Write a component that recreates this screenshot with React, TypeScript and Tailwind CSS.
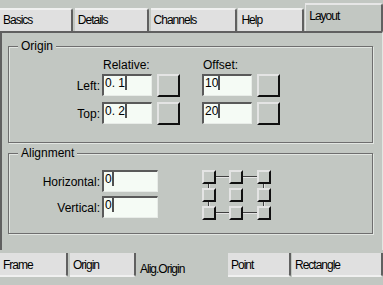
import React from 'react';

const font = { fontFamily: '"Liberation Sans", Arial, sans-serif' };

const TopTab: React.FC<{ label: string; cls: string; active?: boolean }> = ({ label, cls, active }) =>
  active ? (
    <div className={`${cls} h-[28px] bg-[#c2c7c2] border-t-2 border-t-[#e6e6e6] border-l border-l-[#e6e6e6] border-r-2 border-r-[#606060] rounded-tr-[3px] pl-[3px] pt-[4px] text-[12px] tracking-[-1px] leading-[14px] text-black`}>
      {label}
    </div>
  ) : (
    <div className={`${cls} h-[23px] bg-[#e0e0e0] border-t-2 border-t-[#f0f0f0] border-r-2 border-r-[#606060] rounded-tr-[3px] pl-[3px] pt-[3px] text-[12px] tracking-[-1px] leading-[14px] text-black`}>
      {label}
    </div>
  );

const BottomTab: React.FC<{ label: string; cls: string; active?: boolean }> = ({ label, cls, active }) =>
  active ? (
    <div className={`${cls} h-[35px] bg-[#c2c7c2] pl-[3px] pt-[12px] text-[12px] tracking-[-1px] leading-[14px] text-black`}>
      {label}
    </div>
  ) : (
    <div className={`${cls} h-[24px] mt-[3px] bg-[#e0e0e0] border-b-2 border-b-[#f0f0f0] border-r-2 border-r-[#606060] rounded-br-[3px] pl-[3px] pt-[5px] text-[12px] tracking-[-1px] leading-[14px] text-black`}>
      {label}
    </div>
  );

const Field: React.FC<{ value: string; w: string }> = ({ value, w }) => (
  <div className={`${w} h-[22px] bg-[#f5fbf5] border-t-2 border-l-2 border-t-[#5a5a5a] border-l-[#5a5a5a] border-b border-r border-b-[#e8ece8] border-r-[#e8ece8] flex items-start pl-[1px] text-[12px] leading-[14px] text-black`}>
    <span className="whitespace-pre">{value}</span>
    <span className="w-[2px] h-[14px] bg-[#505050]" />
  </div>
);

const Btn: React.FC = () => (
  <div className="w-[23px] h-[23px] bg-[#c2c7c2] border-t-2 border-l-2 border-t-[#e4e4e4] border-l-[#e4e4e4] border-b-2 border-r-2 border-b-[#101010] border-r-[#101010]" />
);

const Small: React.FC = () => (
  <div className="w-[14px] h-[14px] bg-[#c2c7c2] border-t-2 border-l-2 border-t-[#e4e4e4] border-l-[#e4e4e4] border-b-2 border-r-2 border-b-[#101010] border-r-[#101010]" />
);

const HLine: React.FC = () => (
  <div className="flex items-center">
    <div className="w-full h-[2px] border-t border-t-[#404040] border-b border-b-[#e4e4e4]" />
  </div>
);
const VLine: React.FC = () => (
  <div className="flex justify-center">
    <div className="w-[2px] h-full border-l border-l-[#404040] border-r border-r-[#e4e4e4]" />
  </div>
);
const Empty: React.FC = () => <div />;

const Group: React.FC<{ title: string; h: string; children: React.ReactNode }> = ({ title, h, children }) => (
  <div className={`relative ${h} ml-[6px] mr-[9px] border border-[#6e6e6e] shadow-[inset_1px_1px_0_#e2e6e2,1px_1px_0_#e2e6e2]`}>
    <div className="absolute -top-[8px] left-[9px] px-[3px] bg-[#c2c7c2] text-[12px] leading-[14px] text-black">{title}</div>
    {children}
  </div>
);

export default function App() {
  return (
    <div className="w-[383px] h-[285px] bg-[#c2c7c2] overflow-hidden flex flex-col" style={font}>
      <div className="h-[31px] flex items-end">
        <TopTab label="Basics" cls="w-[73px]" />
        <TopTab label="Details" cls="w-[74px] ml-[2px]" />
        <TopTab label="Channels" cls="w-[87px] ml-[2px]" />
        <TopTab label="Help" cls="w-[66px] ml-[1px]" />
        <TopTab label="Layout" cls="w-[78px] ml-[1px]" active />
      </div>
      <div className="h-[219px] border-t-2 border-t-[#606060] border-l-2 border-l-[#606060] border-r border-r-[#e2e6e2] pt-[13px]">
        <Group title="Origin" h="h-[97px]">
          <div className="flex flex-col pt-[11px] text-[12px] leading-[14px] text-black">
            <div className="flex mb-[2px]">
              <div className="w-[94px]" />
              <div className="w-[100px]">Relative:</div>
              <div>Offset:</div>
            </div>
            <div className="grid grid-cols-[93px_50px_50px_50px_55px] grid-rows-[22px_22px] gap-y-[6px]">
              <div className="text-right pr-[2px] pt-[5px]">Left:</div>
              <Field value="0. 1" w="w-[50px]" />
              <div className="pl-[5px]"><Btn /></div>
              <Field value="10" w="w-[50px]" />
              <div className="pl-[5px]"><Btn /></div>
              <div className="text-right pr-[2px] pt-[5px]">Top:</div>
              <Field value="0. 2" w="w-[50px]" />
              <div className="pl-[5px]"><Btn /></div>
              <Field value="20" w="w-[50px]" />
              <div className="pl-[5px]"><Btn /></div>
            </div>
          </div>
        </Group>
        <div className="h-[10px]" />
        <Group title="Alignment" h="h-[81px]">
          <div className="flex pt-[16px] text-[12px] leading-[14px] text-black">
            <div className="grid grid-cols-[93px_56px] grid-rows-[22px_22px] gap-y-[4px]">
              <div className="text-right pr-[2px] pt-[5px]">Horizontal:</div>
              <Field value="0" w="w-[56px]" />
              <div className="text-right pr-[2px] pt-[5px]">Vertical:</div>
              <Field value="0" w="w-[56px]" />
            </div>
            <div className="ml-[44px] grid grid-cols-[14px_13px_14px_14px_14px] grid-rows-[14px_4px_14px_4px_14px]">
              <Small /><HLine /><Small /><HLine /><Small />
              <VLine /><Empty /><Empty /><Empty /><VLine />
              <Small /><Empty /><Small /><Empty /><Small />
              <VLine /><Empty /><Empty /><Empty /><VLine />
              <Small /><HLine /><Small /><HLine /><Small />
            </div>
          </div>
        </Group>
      </div>
      <div className="flex-1 flex items-start">
        <BottomTab label="Frame" cls="w-[68px]" />
        <BottomTab label="Origin" cls="w-[66px] ml-[2px]" />
        <BottomTab label="Alig.Origin" cls="w-[91px] ml-[1px]" active />
        <BottomTab label="Point" cls="w-[63px]" />
        <BottomTab label="Rectangle" cls="w-[91px] ml-[1px]" />
      </div>
    </div>
  );
}
